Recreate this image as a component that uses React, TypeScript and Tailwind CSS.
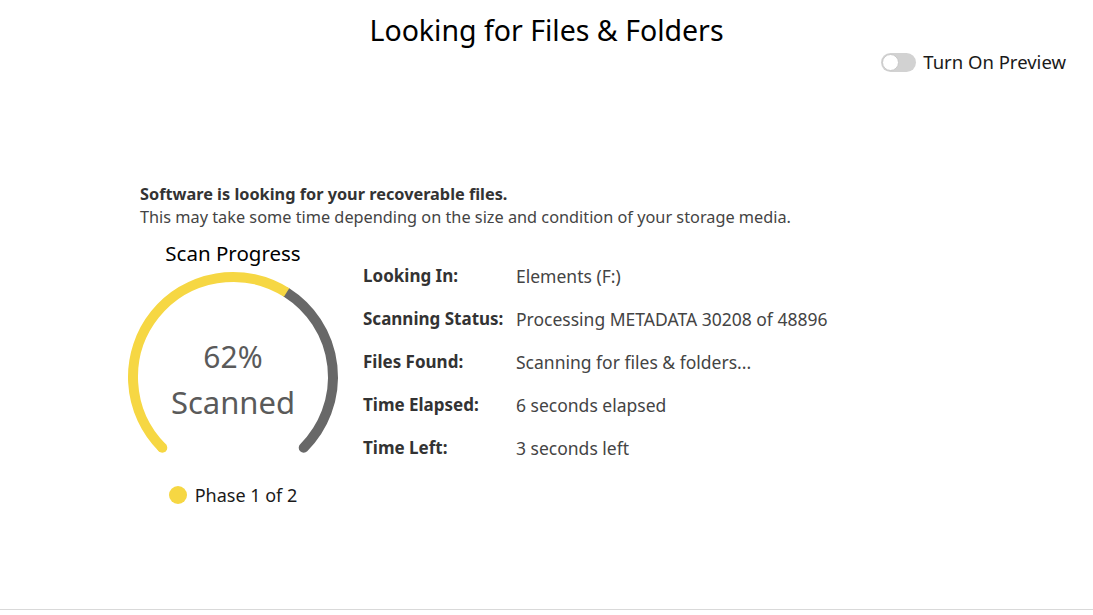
import React from 'react';

const rows = [
  { label: 'Looking In:', value: 'Elements (F:)' },
  { label: 'Scanning Status:', value: 'Processing METADATA 30208 of 48896' },
  { label: 'Files Found:', value: 'Scanning for files & folders...' },
  { label: 'Time Elapsed:', value: '6 seconds elapsed' },
  { label: 'Time Left:', value: '3 seconds left' },
];

// arc helpers for the gauge (270 degree sweep, starting bottom-left)
const CX = 110;
const CY = 110;
const R = 100;

const pointAt = (deg: number) => {
  const rad = (deg * Math.PI) / 180;
  return { x: CX + R * Math.cos(rad), y: CY + R * Math.sin(rad) };
};

const arcPath = (from: number, to: number) => {
  const a = pointAt(from);
  const b = pointAt(to);
  const large = to - from > 180 ? 1 : 0;
  return `M ${a.x} ${a.y} A ${R} ${R} 0 ${large} 1 ${b.x} ${b.y}`;
};

const Gauge: React.FC<{ percent: number }> = ({ percent }) => {
  const start = 135;
  const end = 405;
  const split = start + (270 * percent) / 100;
  const s = pointAt(start);

  return (
    <div className="relative w-[220px] h-[220px]">
      <svg width="220" height="220" viewBox="0 0 220 220">
        <path d={arcPath(split, end)} fill="none" stroke="#686868" strokeWidth="10" strokeLinecap="round" />
        <path d={arcPath(start, split)} fill="none" stroke="#f6d743" strokeWidth="10" strokeLinecap="butt" />
        <circle cx={s.x} cy={s.y} r="5" fill="#f6d743" />
      </svg>
      <div className="absolute inset-0 flex flex-col items-center justify-center pt-[6px] text-[#5a5a5a]">
        <span className="text-[30px] leading-[44px]">{percent}%</span>
        <span className="text-[31px] leading-[46px]">Scanned</span>
      </div>
    </div>
  );
};

const App: React.FC = () => {
  return (
    <div
      className="h-[610px] w-full bg-white border-b border-[#d9d9d9] flex flex-col"
      style={{ fontFamily: '"Noto Sans", "Open Sans", sans-serif' }}
    >
      <h1 className="text-center text-[28.5px] leading-[40px] pt-[10px] text-black">Looking for Files &amp; Folders</h1>

      <div className="flex justify-end items-center pr-[27px] mt-[-1px] gap-[7px]">
        <div className="w-[35px] h-[19px] rounded-full bg-[#d2d2d2] flex items-center px-[1px]">
          <div className="w-[17px] h-[17px] rounded-full bg-white border border-[#c8c8c8]" />
        </div>
        <span className="text-[18.5px] leading-[26px] text-[#1a1a1a]">Turn On Preview</span>
      </div>

      <div className="ml-[123px] mt-[108px]">
        <div className="pl-[17px] text-[16.3px] leading-[23px]">
          <p className="font-bold text-[#333]">Software is looking for your recoverable files.</p>
          <p className="text-[#444]">This may take some time depending on the size and condition of your storage media.</p>
        </div>

        <div className="flex gap-[20px] mt-[6px]">
          <div className="w-[220px] flex flex-col items-center">
            <span className="text-[20.5px] leading-[28px] text-black mt-[4px]">Scan Progress</span>
            <Gauge percent={62} />
            <div className="flex items-center gap-[8px] mt-[-5px]">
              <span className="w-[18px] h-[18px] rounded-full bg-[#f6d743]" />
              <span className="text-[18px] leading-[26px] text-[#1a1a1a]">Phase 1 of 2</span>
            </div>
          </div>

          <div className="flex flex-col gap-[19px] pt-[29px]">
            {rows.map((r) => (
              <div key={r.label} className="flex text-[17px] leading-[24px]">
                <span className="w-[153px] font-bold text-[#333]">{r.label}</span>
                <span className="text-[#444] text-[17.5px]">{r.value}</span>
              </div>
            ))}
          </div>
        </div>
      </div>
    </div>
  );
};

export default App;
